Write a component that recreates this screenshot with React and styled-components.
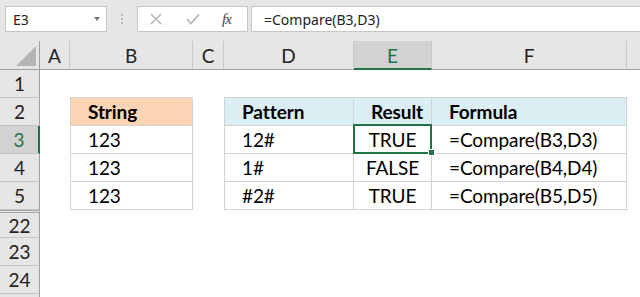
import React from 'react';
import styled, { createGlobalStyle, css } from 'styled-components';

const GlobalStyle = createGlobalStyle`
  html, body { margin: 0; padding: 0; background: #fff; }
  body { overflow: hidden; }
`;

const Window = styled.div`
  width: 640px;
  height: 297px;
  overflow: hidden;
  background: #fff;
  display: flex;
  flex-direction: column;
`;

const FormulaBar = styled.div`
  flex: none;
  height: 41px;
  box-sizing: border-box;
  background: #e6e6e6;
  display: flex;
  align-items: flex-start;
  padding: 6px 0 0 5px;
`;

const Box = styled.div`
  height: 26px;
  box-sizing: border-box;
  background: #fff;
  border: 1px solid #c6c6c6;
  display: flex;
  align-items: center;
`;

const NameBox = styled(Box)`
  width: 102px;
  justify-content: space-between;
  padding: 0 6px 0 7px;
  font: 14px "Noto Sans", sans-serif;
  color: #222;
`;

const DropArrow = styled.span`
  width: 0;
  height: 0;
  border-left: 3.5px solid transparent;
  border-right: 3.5px solid transparent;
  border-top: 4px solid #777;
`;

const Grip = styled.div`
  width: 30px;
  height: 26px;
  display: flex;
  flex-direction: column;
  align-items: center;
  justify-content: center;
  gap: 2px;
  & > span {
    width: 2px;
    height: 2px;
    background: #b9b9b9;
  }
`;

const FxBox = styled(Box)`
  width: 111px;
  padding: 0 0 0 12px;
`;

const IconSlot = styled.div`
  width: ${(p) => p.$w}px;
  display: flex;
  align-items: center;
  justify-content: center;
`;

const Fx = styled.span`
  font: italic 15px "Liberation Serif", serif;
  color: #444;
  letter-spacing: -1px;
`;

const FormulaInput = styled(Box)`
  flex: 1;
  margin-left: 3px;
  border-right: none;
  padding-left: 12px;
  font: 14px "Noto Sans", sans-serif;
  color: #222;
`;

const Sheet = styled.div`
  flex: 1;
  display: grid;
  grid-template-columns: 40px 30px 123px 31px 130px 78px 195px 1fr;
  grid-template-rows: 29px repeat(9, 28px);
  font-family: "Lato", "Liberation Sans", sans-serif;
  font-size: 19px;
  letter-spacing: -0.1px;
  color: #000;
`;

const headBase = css`
  box-sizing: border-box;
  background: #e6e6e6;
  display: flex;
  align-items: center;
  justify-content: center;
  color: #222;
  font-size: 19px;
`;

const Corner = styled.div`
  ${headBase};
  border-right: 1px solid #9f9f9f;
  border-bottom: 1px solid #9f9f9f;
  align-items: flex-end;
  justify-content: flex-end;
  padding: 0 3px 3px 0;
`;

const ColHead = styled.div`
  ${headBase};
  border-right: 1px solid ${(p) => (p.$last ? 'transparent' : '#c8c8c8')};
  border-bottom: 1px solid #9f9f9f;
  padding-top: 1px;
  ${(p) =>
    p.$selected &&
    css`
      background: #d2d2d2;
      color: #217346;
      border-bottom: 2px solid #217346;
    `}
`;

const RowHead = styled.div`
  ${headBase};
  border-right: 1px solid #9f9f9f;
  border-bottom: 1px solid #c4c4c4;
  ${(p) =>
    p.$selected &&
    css`
      background: #d2d2d2;
      color: #217346;
      border-right: 2px solid #217346;
    `}
  ${(p) =>
    p.$gap &&
    css`
      border-top: 3px double #a6a6a6;
    `}
`;

const Cell = styled.div`
  box-sizing: border-box;
  position: relative;
  display: flex;
  align-items: center;
  padding-left: 17px;
  white-space: nowrap;
  ${(p) =>
    p.$table &&
    css`
      border-right: 1px solid #d4d4d4;
      border-bottom: 1px solid #d4d4d4;
    `}
  ${(p) => p.$first && css`border-left: 1px solid #d4d4d4;`}
  ${(p) =>
    p.$head &&
    css`
      margin-top: -1px;
      border-top: 1px solid #d4d4d4;
      font-weight: 700;
      background: ${p.$head === 'peach' ? '#fcd5b4' : '#daeef3'};
    `}
  ${(p) =>
    p.$center &&
    css`
      justify-content: center;
      padding-left: 0;
    `}
  ${(p) => p.$active && css`z-index: 2;`}
`;

const Selection = styled.div`
  position: absolute;
  left: -1px;
  top: -2px;
  right: -1px;
  bottom: -1px;
  border: 2px solid #217346;
  pointer-events: none;
`;

const Handle = styled.div`
  position: absolute;
  right: -5px;
  bottom: -4px;
  width: 5px;
  height: 5px;
  background: #217346;
  border: 1px solid #fff;
`;

const COLS = ['A', 'B', 'C', 'D', 'E', 'F', ''];

const ROWS = [
  { n: '1' },
  {
    n: '2',
    B: { t: 'String', head: 'peach', first: true },
    D: { t: 'Pattern', head: 'blue', first: true },
    E: { t: 'Result', head: 'blue' },
    F: { t: 'Formula', head: 'blue' },
  },
  {
    n: '3',
    sel: true,
    B: { t: '123', first: true },
    D: { t: '12#', first: true },
    E: { t: 'TRUE', center: true, active: true },
    F: { t: '=Compare(B3,D3)' },
  },
  {
    n: '4',
    B: { t: '123', first: true },
    D: { t: '1#', first: true },
    E: { t: 'FALSE', center: true },
    F: { t: '=Compare(B4,D4)' },
  },
  {
    n: '5',
    B: { t: '123', first: true },
    D: { t: '#2#', first: true },
    E: { t: 'TRUE', center: true },
    F: { t: '=Compare(B5,D5)' },
  },
  { n: '22', gap: true },
  { n: '23' },
  { n: '24' },
  { n: '' },
];

function XIcon() {
  return (
    <svg width="12" height="12" viewBox="0 0 12 12">
      <path d="M1 1 L11 11 M11 1 L1 11" stroke="#b3b3b3" strokeWidth="1.4" fill="none" />
    </svg>
  );
}

function CheckIcon() {
  return (
    <svg width="14" height="12" viewBox="0 0 14 12">
      <path d="M1 6 L5 10.5 L13 1.5" stroke="#b3b3b3" strokeWidth="1.6" fill="none" />
    </svg>
  );
}

function CornerTriangle() {
  return (
    <svg width="20" height="20" viewBox="0 0 20 20">
      <polygon points="20,0 20,20 0,20" fill="#b4b4b4" />
    </svg>
  );
}

export default function App() {
  return (
    <Window>
      <GlobalStyle />
      <FormulaBar>
        <NameBox>
          <span>E3</span>
          <DropArrow />
        </NameBox>
        <Grip>
          <span />
          <span />
          <span />
        </Grip>
        <FxBox>
          <IconSlot $w={12}>
            <XIcon />
          </IconSlot>
          <IconSlot $w={24} />
          <IconSlot $w={14}>
            <CheckIcon />
          </IconSlot>
          <IconSlot $w={22} />
          <Fx>fx</Fx>
        </FxBox>
        <FormulaInput>=Compare(B3,D3)</FormulaInput>
      </FormulaBar>
      <Sheet>
        <Corner>
          <CornerTriangle />
        </Corner>
        {COLS.map((c, i) => (
          <ColHead key={i} $selected={c === 'E'} $last={i === COLS.length - 1}>
            {c}
          </ColHead>
        ))}
        {ROWS.map((r, ri) => (
          <React.Fragment key={ri}>
            <RowHead $selected={r.sel} $gap={r.gap}>
              {r.n}
            </RowHead>
            {COLS.map((c, i) => {
              const d = r[c];
              if (!d) return <Cell key={i} />;
              return (
                <Cell
                  key={i}
                  $table
                  $first={d.first}
                  $head={d.head}
                  $center={d.center}
                  $active={d.active}
                >
                  {d.t}
                  {d.active && (
                    <Selection>
                      <Handle />
                    </Selection>
                  )}
                </Cell>
              );
            })}
          </React.Fragment>
        ))}
      </Sheet>
    </Window>
  );
}
